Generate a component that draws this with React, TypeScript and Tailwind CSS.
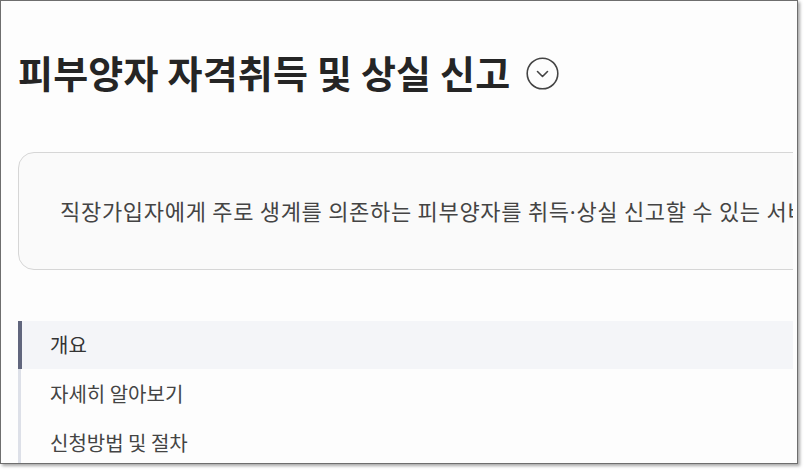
import React from 'react'

const NAV = [
  { label: '개요', active: true },
  { label: '자세히 알아보기', active: false },
  { label: '신청방법 및 절차', active: false },
]

export default function App() {
  return (
    <div
      className="w-[805px] h-[471px] bg-white overflow-hidden"
      style={{ fontFamily: '"Noto Sans CJK KR", "Noto Sans", sans-serif' }}
    >
      {/* window frame */}
      <div className="w-[798px] h-[464px] border border-[#6e6e6e] bg-[#fdfdfd] shadow-[2px_2px_3px_rgba(0,0,0,0.35)] overflow-hidden flex">
        <div className="w-[792px] flex-shrink-0 overflow-hidden pl-[17px] pt-[48px]">
          {/* Title */}
          <div className="flex items-center gap-[16px] whitespace-nowrap">
            <h1 className="text-[38px] leading-[46px] font-bold text-[#252525] tracking-[0.2px]">
              피부양자 자격취득 및 상실 신고
            </h1>
            <svg width="33" height="33" viewBox="0 0 33 33" fill="none" className="mt-[2px]">
              <circle cx="16.5" cy="16.5" r="15.3" stroke="#444" strokeWidth="1.6" />
              <path d="M11.5 14.5 L16.5 19.5 L21.5 14.5" stroke="#444" strokeWidth="1.6" strokeLinecap="round" strokeLinejoin="round" />
            </svg>
          </div>

          {/* Summary card */}
          <div className="mt-[57px] w-[1000px] h-[118px] rounded-2xl border border-[#d6d6d6] bg-[#fafafa] flex items-center pl-[41px]">
            <p className="text-[22px] text-[#444] whitespace-nowrap tracking-[0.7px]">
              직장가입자에게 주로 생계를 의존하는 피부양자를 취득<span style={{ fontFamily: '"Noto Sans", sans-serif' }}>·</span>상실 신고할 수 있는 서비스입니다.
            </p>
          </div>

          {/* Tab nav */}
          <nav className="mt-[51px] flex flex-col">
            {NAV.map(item => (
              <div
                key={item.label}
                className={
                  item.active
                    ? 'h-[48px] flex items-center border-l-[4px] border-[#61667d] bg-[#f4f5f8] pl-[28px] text-[20px] text-[#333]'
                    : 'h-[49px] flex items-center border-l-[3px] border-[#dde0e8] pl-[29px] text-[20px] text-[#444]'
                }
              >
                {item.label}
              </div>
            ))}
          </nav>
        </div>
      </div>
    </div>
  )
}
